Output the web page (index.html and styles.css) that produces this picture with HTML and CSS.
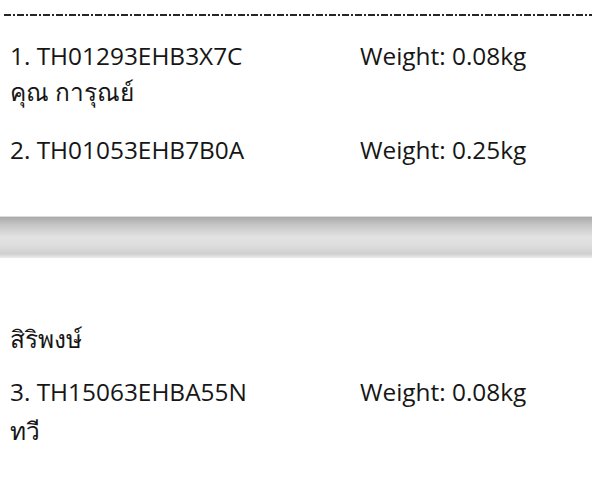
FILE: index.html
```html
<!DOCTYPE html>
<html lang="th">
<head>
    <meta charset="UTF-8">
    <meta name="viewport" content="width=device-width, initial-scale=1.0">
    <title>Parcel List</title>
    <link rel="stylesheet" href="styles.css">
</head>
<body>
    <div class="sheet">
        <div class="cut-line"></div>
        <div class="parcel">
            <div class="row">
                <span class="code">1. TH01293EHB3X7C</span>
                <span class="weight">Weight: 0.08kg</span>
            </div>
            <div class="name">คุณ การุณย์</div>
        </div>
        <div class="parcel">
            <div class="row">
                <span class="code">2. TH01053EHB7B0A</span>
                <span class="weight">Weight: 0.25kg</span>
            </div>
        </div>
    </div>

    <div class="page-break"></div>

    <div class="sheet sheet-next">
        <div class="name name-carry">สิริพงษ์</div>
        <div class="parcel">
            <div class="row">
                <span class="code">3. TH15063EHBA55N</span>
                <span class="weight">Weight: 0.08kg</span>
            </div>
            <div class="name name-last">ทวี</div>
        </div>
    </div>
</body>
</html>
```

FILE: styles.css
```css
body {
    margin: 0;
    background: #ffffff;
    color: #161616;
    font-family: "Open Sans", "Noto Sans", sans-serif;
    font-size: 24.4px;
}
.sheet {
    padding: 14px 0 0 10px;
}
.cut-line {
    height: 2px;
    margin: 0 0 22px -6px;
    background: repeating-linear-gradient(90deg,
        #262626 0, #262626 7px,
        transparent 7px, transparent 9px,
        #262626 9px, #262626 11px,
        transparent 11px, transparent 13px);
}
.parcel {
    margin-bottom: 22px;
}
.row {
    display: grid;
    grid-template-columns: 350px auto;
    line-height: 36px;
}
.name {
    line-height: 36px;
}
.name-carry {
    margin-bottom: 17px;
}
.name-last {
    margin-top: 3px;
}
.page-break {
    height: 40px;
    margin-top: 48px;
    border-top: 1px solid #dcdcdc;
    border-bottom: 1px solid #e8e8e8;
    background: linear-gradient(#a9a9a9 0, #c6c6c6 20%, #e2e2e2 50%, #dedede 70%, #cfcfcf 92%, #e6e6e6 100%);
}
.sheet-next {
    padding-top: 63px;
}
```
